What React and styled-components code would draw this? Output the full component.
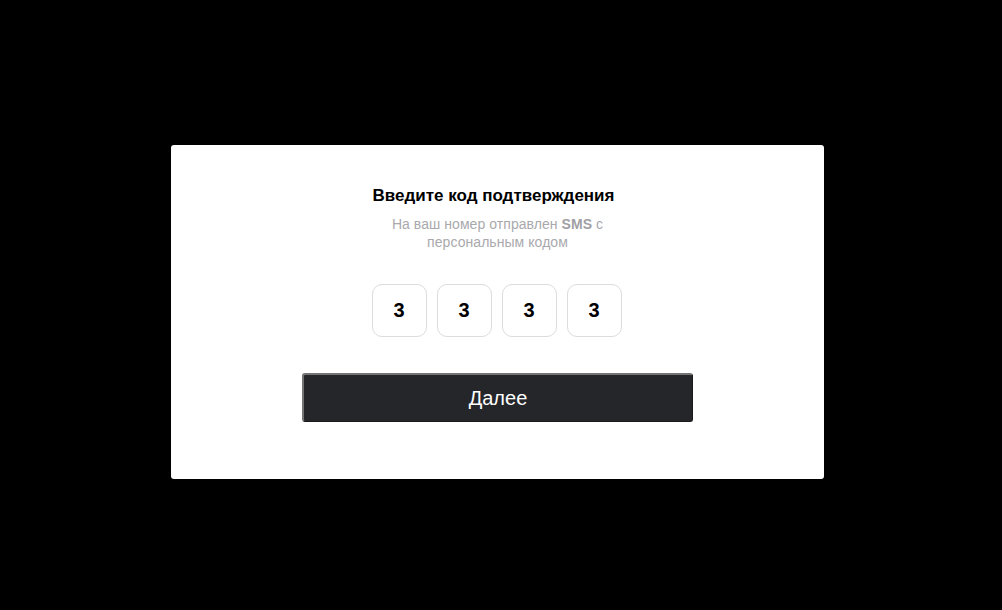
import React from "react";
import styled, { createGlobalStyle } from "styled-components";

const Global = createGlobalStyle`
  html, body { margin: 0; padding: 0; background: #000; }
  body { font-family: "Liberation Sans", Arial, sans-serif; }
`;

const Screen = styled.div`
  width: 1002px;
  height: 610px;
  background: #000;
  display: flex;
  justify-content: center;
  align-items: flex-start;
  padding: 145px 7px 0 0;
  box-sizing: border-box;
`;

const Card = styled.div`
  width: 653px;
  height: 334px;
  background: #fff;
  border-radius: 3px;
  display: flex;
  flex-direction: column;
  align-items: center;
  padding-top: 41px;
  box-sizing: border-box;
`;

const Title = styled.h2`
  margin: 0 8px 0 0;
  font-size: 17px;
  font-weight: 700;
  color: #000;
  line-height: 20px;
`;

const Subtitle = styled.p`
  margin: 9px 0 0;
  width: 232px;
  text-align: center;
  font-size: 14px;
  letter-spacing: 0.06px;
  line-height: 18px;
  color: #a9a9ad;
  b { font-weight: 700; color: #a0a0a4; }
`;

const Codes = styled.div`
  display: flex;
  gap: 10px;
  margin: 33px 2px 0 0;
`;

const CodeBox = styled.div`
  width: 55px;
  height: 53px;
  box-sizing: border-box;
  border: 1px solid #dcdcdc;
  border-radius: 10px;
  display: flex;
  align-items: center;
  justify-content: center;
  font-size: 20px;
  font-weight: 700;
  color: #000;
`;

const Button = styled.button`
  margin-top: 36px;
  width: 391px;
  height: 49px;
  background: #25262a;
  color: #fff;
  font-family: "Liberation Sans", Arial, sans-serif;
  font-size: 20px;
  border-radius: 3px;
  border-style: solid;
  border-width: 2px 1px 1px 2px;
  border-color: #747474 #1a1a1c #1a1a1c #747474;
  cursor: pointer;
`;

export default function App() {
  const digits = ["3", "3", "3", "3"];
  return (
    <>
      <Global />
      <Screen>
        <Card>
          <Title>Введите код подтверждения</Title>
          <Subtitle>
            На ваш номер отправлен <b>SMS</b> с персональным кодом
          </Subtitle>
          <Codes>
            {digits.map((d, i) => (
              <CodeBox key={i}>{d}</CodeBox>
            ))}
          </Codes>
          <Button>Далее</Button>
        </Card>
      </Screen>
    </>
  );
}
